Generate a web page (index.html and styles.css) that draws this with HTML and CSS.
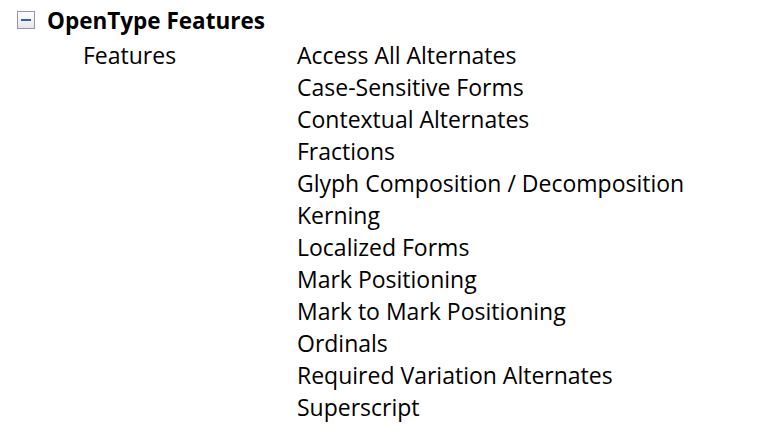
FILE: index.html
```html
<!DOCTYPE html>
<html>
<head>
<meta charset="utf-8">
<link rel="stylesheet" href="styles.css">
</head>
<body>
<div class="tree">
  <div class="group-head">
    <span class="expander"><span class="minus"></span></span>
    <span class="group-title">OpenType Features</span>
  </div>
  <div class="prop">
    <div class="prop-name">Features</div>
    <ul class="prop-values">
      <li>Access All Alternates</li>
      <li>Case-Sensitive Forms</li>
      <li>Contextual Alternates</li>
      <li>Fractions</li>
      <li>Glyph Composition / Decomposition</li>
      <li>Kerning</li>
      <li>Localized Forms</li>
      <li>Mark Positioning</li>
      <li>Mark to Mark Positioning</li>
      <li>Ordinals</li>
      <li>Required Variation Alternates</li>
      <li>Superscript</li>
    </ul>
  </div>
</div>
</body>
</html>
```
FILE: styles.css
```css
html, body {
  margin: 0;
  padding: 0;
  background: #ffffff;
}
body {
  font-family: "Open Sans", "Noto Sans", sans-serif;
  font-size: 23px;
  color: #000;
  width: 769px;
  height: 424px;
  overflow: hidden;
}
.tree {
  padding-top: 4px;
}
.group-head {
  display: flex;
  align-items: center;
  height: 32px;
  padding-left: 17px;
}
.expander {
  box-sizing: border-box;
  width: 18px;
  height: 18px;
  border: 1px solid #9a8fb0;
  background: linear-gradient(#ffffff, #e6e6e6);
  display: flex;
  align-items: center;
  justify-content: center;
}
.minus {
  width: 10px;
  height: 2px;
  background: #3d5aa8;
}
.group-title {
  font-weight: bold;
  font-size: 22.5px;
  margin-left: 12px;
}
.prop {
  display: grid;
  grid-template-columns: 214px 1fr;
  padding-left: 83px;
  margin-top: 3px;
}
.prop-name, .prop-values li {
  height: 32px;
  line-height: 32px;
}
.prop-values {
  list-style: none;
  margin: 0;
  padding: 0;
}
```
